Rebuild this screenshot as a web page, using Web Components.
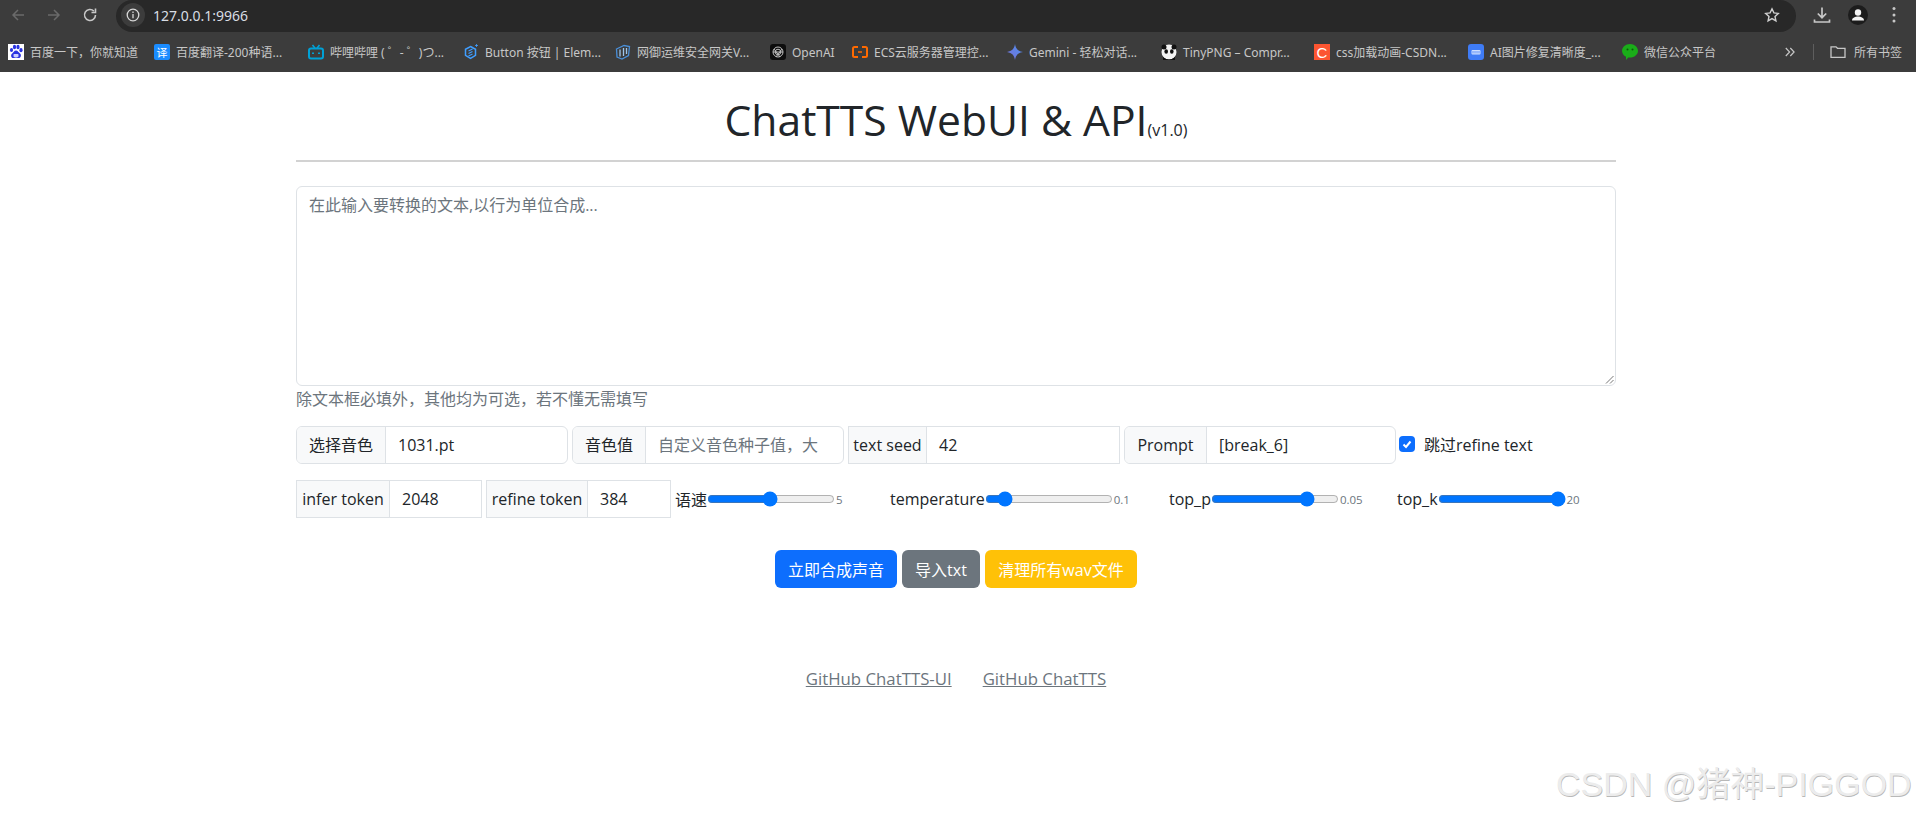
<!DOCTYPE html>
<html lang="zh">
<head>
<meta charset="utf-8">
<title>ChatTTS WebUI & API</title>
<style>
  html, body { margin: 0; padding: 0; background: #fff; }
  body { font-family: "Open Sans", "Noto Sans CJK SC", sans-serif; color: #212529; font-size: 16px; height: 813px; overflow: hidden; position: relative; }
</style>
</head>
<body>
<browser-toolbar url="127.0.0.1:9966"></browser-toolbar>
<bookmark-bar>
  <bookmark-item style="width:146px" label="百度一下，你就知道"><svg viewBox="0 0 16 16"><rect width="16" height="16" fill="#fff"/><g fill="#2932e1"><ellipse cx="3.500" cy="6" rx="1.600" ry="2.100"/><ellipse cx="6.500" cy="3" rx="1.600" ry="2.200"/><ellipse cx="10" cy="3" rx="1.600" ry="2.200"/><ellipse cx="13" cy="6.200" rx="1.600" ry="2.100"/><path d="M8 6.500c2 0 2.600 2 4 3 1.800 1.400.8 4.800-1.600 4.500-1-.1-1.600-.5-2.400-.5s-1.500.5-2.500.5C3.100 14.300 2.300 11 4.200 9.500 5.600 8.500 6 6.500 8 6.500z"/></g><rect x="5.500" y="10" width="5" height="3" rx=".8" fill="#cdd0ff"/></svg></bookmark-item>
  <bookmark-item style="width:154px" label="百度翻译-200种语..."><svg viewBox="0 0 16 16"><rect width="16" height="16" rx="2" fill="#1a8cff"/><text x="8" y="12.500" text-anchor="middle" font-size="11" font-family="Noto Sans CJK SC" fill="#fff">译</text></svg></bookmark-item>
  <bookmark-item style="width:155px" label="哔哩哔哩 ( ゜- ゜)つ..."><svg viewBox="0 0 16 16" fill="none" stroke="#00a1d6" stroke-width="2"><rect x="1" y="4.500" width="14" height="10" rx="2"/><path d="M4.500 1l2.500 3.200M11.500 1L9 4.200" stroke-width="1.600"/><path d="M5 8.500v1.500M11 8.500v1.500"/></svg></bookmark-item>
  <bookmark-item style="width:152px" label="Button 按钮 | Elem..."><svg viewBox="0 0 16 16" fill="none" stroke="#409eff" stroke-width="1.500"><path d="M7.500 2.500l5 2.800v6l-5 3-5-3v-6z"/><path d="M5.500 7l4-2M5.500 9.500l4-2M5.500 12l4-2" stroke-width="1.200"/><path d="M13.500 0v3M12 1.500h3" stroke-width=".8"/></svg></bookmark-item>
  <bookmark-item style="width:155px" label="网御运维安全网关V..."><svg viewBox="0 0 16 16" fill="none" stroke="#4a8fd8" stroke-width="1.300"><path d="M1.500 5L9 1.500l5.500 1-1 9L7 15l-5-2z"/><path d="M5 5.500v7M8.500 4v8M11.500 4v6" stroke="#9cc4ea"/></svg></bookmark-item>
  <bookmark-item style="width:82px" label="OpenAI"><svg viewBox="0 0 16 16"><rect width="16" height="16" rx="3" fill="#0d0d0d"/><g fill="none" stroke="#bdbdbd" stroke-width="1"><circle cx="8" cy="8" r="5"/><circle cx="8" cy="8" r="2.800"/><path d="M4 5l6 8M12 5l-6 8M3 8h10"/></g></svg></bookmark-item>
  <bookmark-item style="width:155px" label="ECS云服务器管理控..."><svg viewBox="0 0 16 16" fill="none" stroke="#ff6a00" stroke-width="2"><path d="M6 3H2.500Q1 3 1 4.500v7Q1 13 2.500 13H6M10 3h3.500Q15 3 15 4.500v7Q15 13 13.500 13H10"/><path d="M6 8h4" stroke-width="1.500"/></svg></bookmark-item>
  <bookmark-item style="width:154px" label="Gemini - 轻松对话..."><svg viewBox="0 0 16 16"><defs><linearGradient id="gem" x1="0" y1="1" x2="1" y2="0"><stop offset="0" stop-color="#7b6fd6"/><stop offset="1" stop-color="#4a90f0"/></linearGradient></defs><path d="M8 0c.6 4.500 3 7.200 8 8-5 .8-7.400 3.500-8 8-.6-4.500-3-7.200-8-8 5-.8 7.400-3.500 8-8z" fill="url(#gem)"/></svg></bookmark-item>
  <bookmark-item style="width:153px" label="TinyPNG – Compr..."><svg viewBox="0 0 16 16"><circle cx="8" cy="8" r="7.500" fill="#f4f4f4"/><circle cx="3" cy="3" r="2.500" fill="#111"/><circle cx="13" cy="3" r="2.500" fill="#111"/><ellipse cx="5.200" cy="7.500" rx="1.800" ry="2.200" fill="#111"/><ellipse cx="10.800" cy="7.500" rx="1.800" ry="2.200" fill="#111"/><path d="M2 13q6 5 12 0v3H2z" fill="#111"/></svg></bookmark-item>
  <bookmark-item style="width:154px" label="css加载动画-CSDN..."><svg viewBox="0 0 16 16"><rect width="16" height="16" fill="#fc5531"/><text x="8" y="13.500" text-anchor="middle" font-size="15" font-family="Liberation Sans" fill="#fff">C</text></svg></bookmark-item>
  <bookmark-item style="width:154px" label="AI图片修复清晰度_..."><svg viewBox="0 0 16 16"><rect width="16" height="16" rx="3" fill="#3f7cf6"/><rect x="3.500" y="6" width="9" height="4.500" rx="1" fill="#cfe0ff"/><path d="M5 7v2.500M7 7v2.500M9 7v2.500M11 7v2.500" stroke="#3f7cf6" stroke-width=".8"/></svg></bookmark-item>
  <bookmark-item style="width:100px" label="微信公众平台"><svg viewBox="0 0 16 16"><path d="M8 0c4.400 0 8 3 8 6.800s-3.600 6.800-8 6.800c-.6 0-1.200-.1-1.700-.2L4 16v-3.200C1.600 11.600 0 9.400 0 6.800 0 3 3.600 0 8 0z" fill="#1aad19"/><circle cx="5.500" cy="5.500" r="1" fill="#0b5c0a"/><circle cx="10.500" cy="5.500" r="1" fill="#0b5c0a"/></svg></bookmark-item>
  <bookmark-end></bookmark-end>
</bookmark-bar>
<tts-page></tts-page>
<csdn-mark>CSDN @猪神-PIGGOD</csdn-mark>

<script>
const UI_FONT = '"Open Sans", "Noto Sans CJK SC", sans-serif';

class BrowserToolbar extends HTMLElement {
  constructor() {
    super();
    this.attachShadow({ mode: 'open' });
  }
  connectedCallback() {
    this.shadowRoot.innerHTML = `
      <style>
        :host { display: flex; height: 32px; background: #3c3c3c; align-items: stretch; }
        .nav { display: flex; width: 116px; align-items: center; gap: 20px; padding: 0 0 2px 10px; box-sizing: border-box; flex: none; }
        svg { display: block; flex: none; }
        .omni { width: 1680px; flex: none; background: #282828; border-radius: 16px; display: flex; align-items: center; padding: 0 16px 2px 5px; box-sizing: border-box; }
        .info { width: 24px; height: 24px; background: #3c3c3c; border-radius: 50%; display: flex; align-items: center; justify-content: center; }
        .url { margin-left: 8px; font: 14px "Noto Sans", sans-serif; color: #d8dde3; }
        .star { margin-left: auto; }
        .tools { flex: 1; display: flex; align-items: center; gap: 17px; padding: 0 0 2px 17px; }
      </style>
      <div class="nav">
        <svg width="16" height="16" viewBox="0 0 16 16" fill="none" stroke="#6a6a6a" stroke-width="1.500"><path d="M14 8H3M8 3L3 8l5 5"/></svg>
        <svg width="16" height="16" viewBox="0 0 16 16" fill="none" stroke="#6a6a6a" stroke-width="1.500"><path d="M2 8h11M8 3l5 5-5 5"/></svg>
        <svg width="16" height="16" viewBox="0 0 16 16" fill="none" stroke="#c7c7c7" stroke-width="1.600"><path d="M13.500 8a5.500 5.500 0 1 1-1.600-3.900"/><path d="M13.500 1.500v4H9.500"/></svg>
      </div>
      <div class="omni">
        <div class="info"><svg width="14" height="14" viewBox="0 0 14 14" fill="none" stroke="#d8d8d8" stroke-width="1.300"><circle cx="7" cy="7" r="5.800"/><path d="M7 6v4.200M7 3.600v1.300"/></svg></div>
        <span class="url">${this.getAttribute('url')}</span>
        <svg class="star" width="16" height="16" viewBox="0 0 16 16" fill="none" stroke="#d0d0d0" stroke-width="1.400"><path d="M8 1.800l1.900 4.100 4.400.5-3.300 3 .9 4.400L8 11.600l-3.900 2.200.9-4.400-3.300-3 4.400-.5z"/></svg>
      </div>
      <div class="tools">
        <svg width="18" height="18" viewBox="0 0 18 18" fill="none" stroke="#c7c7c7" stroke-width="1.700"><path d="M9 1.500v10M4.800 7.500L9 11.700l4.200-4.200M1.500 13.500v2.500h15v-2.500"/></svg>
        <svg width="20" height="20" viewBox="0 0 20 20"><circle cx="10" cy="10" r="10" fill="#1c1c1c"/><circle cx="10" cy="7.500" r="3.200" fill="#f2f2f2"/><path d="M4 15.500c0-3 3.500-4 6-4s6 1 6 4z" fill="#f2f2f2"/></svg>
        <svg width="18" height="18" viewBox="0 0 18 18" fill="#c7c7c7"><circle cx="9" cy="2.500" r="1.500"/><circle cx="9" cy="9" r="1.500"/><circle cx="9" cy="15" r="1.500"/></svg>
      </div>
    `;
  }
}

class BookmarkBar extends HTMLElement {
  constructor() {
    super();
    this.attachShadow({ mode: 'open' });
  }
  connectedCallback() {
    this.shadowRoot.innerHTML = `
      <style>
        :host { display: flex; height: 40px; background: #3c3c3c; align-items: center; padding-left: 8px; box-sizing: border-box; }
      </style>
      <slot></slot>
    `;
  }
}

class BookmarkItem extends HTMLElement {
  constructor() {
    super();
    this.attachShadow({ mode: 'open' });
  }
  connectedCallback() {
    this.shadowRoot.innerHTML = `
      <style>
        :host { display: flex; align-items: center; gap: 6px; flex: none; font: 12px "Noto Sans", "Noto Sans CJK SC", sans-serif; color: #c7c7c7; white-space: nowrap; overflow: hidden; }
        ::slotted(svg) { width: 16px; height: 16px; flex: none; display: block; }
      </style>
      <slot></slot><span>${this.getAttribute('label')}</span>
    `;
  }
}

class BookmarkEnd extends HTMLElement {
  constructor() {
    super();
    this.attachShadow({ mode: 'open' });
  }
  connectedCallback() {
    this.shadowRoot.innerHTML = `
      <style>
        :host { display: flex; align-items: center; margin-left: auto; padding-right: 14px; font: 12px "Noto Sans", "Noto Sans CJK SC", sans-serif; color: #c7c7c7; }
        .sep { width: 1px; height: 16px; background: #5e5e5e; margin: 0 16px 0 18px; }
        svg { display: block; flex: none; }
        .folder { margin-right: 8px; }
      </style>
      <svg width="10" height="10" viewBox="0 0 10 10" fill="none" stroke="#c7c7c7" stroke-width="1.200"><path d="M.8 1l3.800 4-3.800 4M5.300 1l3.800 4-3.800 4"/></svg>
      <span class="sep"></span>
      <svg class="folder" width="16" height="16" viewBox="0 0 16 16" fill="none" stroke="#c7c7c7" stroke-width="1.300"><path d="M1 2.800h5l1.500 1.500H15v9H1z"/></svg>
      <span>所有书签</span>
    `;
  }
}

class FormField extends HTMLElement {
  constructor() {
    super();
    this.attachShadow({ mode: 'open' });
  }
  connectedCallback() {
    const r = this.hasAttribute('square') ? '0' : '6px';
    this.shadowRoot.innerHTML = `
      <style>
        :host { display: flex; height: 38px; flex: none; box-sizing: border-box; border: 1px solid #dee2e6; border-radius: ${r}; overflow: hidden; background: #fff; line-height: 24px; }
        .addon { flex: none; width: var(--addon, 90px); box-sizing: border-box; background: #f8f9fa; border-right: 1px solid #dee2e6; display: flex; align-items: center; justify-content: center; white-space: nowrap; }
        .val { flex: 1; padding-left: 12px; display: flex; align-items: center; min-width: 0; white-space: nowrap; overflow: hidden; }
        .hint { color: #6c757d; }
      </style>
      <div class="addon">${this.getAttribute('label')}</div>
      <div class="val ${this.hasAttribute('placeholder') ? 'hint' : ''}"><slot></slot></div>
    `;
  }
}

class RangeField extends HTMLElement {
  constructor() {
    super();
    this.attachShadow({ mode: 'open' });
  }
  connectedCallback() {
    this.shadowRoot.innerHTML = `
      <style>
        :host { display: flex; align-items: center; flex: none; white-space: nowrap; height: 38px; }
        input { margin: 0; width: 128px; flex: none; accent-color: #0075ff; }
        .num { font-size: 11.500px; color: #6c757d; margin-left: 1px; }
      </style>
      <label>${this.getAttribute('label')}</label>
      <input type="range" min="0" max="100" value="${this.getAttribute('pos')}">
      <span class="num">${this.getAttribute('num')}</span>
    `;
  }
}

class TtsButton extends HTMLElement {
  constructor() {
    super();
    this.attachShadow({ mode: 'open' });
  }
  connectedCallback() {
    this.shadowRoot.innerHTML = `
      <style>
        :host { display: flex; align-items: center; justify-content: center; height: 38px; flex: none; box-sizing: border-box; border-radius: 6px; color: #fff; background: var(--bg, #0d6efd); white-space: nowrap; cursor: pointer; }
      </style>
      <slot></slot>
    `;
  }
}

class CsdnMark extends HTMLElement {
  constructor() {
    super();
    this.attachShadow({ mode: 'open' });
  }
  connectedCallback() {
    this.shadowRoot.innerHTML = `
      <style>
        :host { position: absolute; left: 1556px; top: 757px; font: 34px "Liberation Sans", "Noto Sans CJK SC", sans-serif; color: #ececec; text-shadow: .6px .6px .6px #b8b8b8; white-space: nowrap; }
      </style>
      <slot></slot>
    `;
  }
}

class TtsPage extends HTMLElement {
  constructor() {
    super();
    this.attachShadow({ mode: 'open' });
  }
  connectedCallback() {
    this.shadowRoot.innerHTML = `
      <style>
        :host { display: block; width: 1320px; margin-left: 296px; font-family: ${UI_FONT}; }
        header { height: 90px; border-bottom: 2px solid #d2d2d2; box-sizing: border-box; display: flex; justify-content: center; align-items: baseline; padding-top: 21px; margin-bottom: 24px; }
        h1 { margin: 0; font: 400 42.600px/52px "Open Sans", sans-serif; color: #212529; }
        h1 small { font: 16px "Open Sans", sans-serif; }
        .input { height: 200px; box-sizing: border-box; border: 1px solid #dee2e6; border-radius: 6px; padding: 6px 12px; color: #6c757d; line-height: 24px; position: relative; }
        .grip { position: absolute; right: 1px; bottom: 1px; display: block; }
        .note { color: #6c757d; line-height: 24px; margin: 1px 0 15px; }
        .row { display: flex; align-items: center; gap: 4px; }
        .row + .row { margin-top: 16px; }
        .check { display: flex; align-items: center; gap: 9px; white-space: nowrap; margin: -3px 0 0 -1px; }
        .box { width: 16px; height: 16px; border-radius: 4px; background: #0d6efd; display: flex; align-items: center; justify-content: center; }
        .actions { display: flex; justify-content: center; gap: 5px; margin-top: 32px; }
        footer { display: flex; justify-content: center; gap: 31px; margin-top: 79px; line-height: 24px; font-size: 16.800px; }
        a { color: #6c757d; text-decoration: underline; }
      </style>
      <header><h1>ChatTTS WebUI &amp; API<small>(v1.0)</small></h1></header>
      <div class="input">在此输入要转换的文本,以行为单位合成...
        <svg class="grip" width="10" height="10" viewBox="0 0 10 10" stroke="#777" stroke-width="1"><path d="M2 9.500L9.500 2M6 9.500L9.500 6"/></svg>
      </div>
      <div class="note">除文本框必填外，其他均为可选，若不懂无需填写</div>
      <div class="row">
        <form-field style="width:272px;--addon:89px" label="选择音色">1031.pt</form-field>
        <form-field style="width:272px;--addon:73px" label="音色值" placeholder>自定义音色种子值，大</form-field>
        <form-field style="width:272px;--addon:78px" label="text seed" square>42</form-field>
        <form-field style="width:272px;--addon:82px" label="Prompt">[break_6]</form-field>
        <div class="check">
          <span class="box"><svg width="12" height="12" viewBox="0 0 12 12" fill="none" stroke="#fff" stroke-width="2"><path d="M2.500 6.500L5 9l4.500-5.500"/></svg></span>
          <span>跳过refine text</span>
        </div>
      </div>
      <div class="row">
        <form-field style="width:186px;--addon:93px" label="infer token" square>2048</form-field>
        <form-field style="width:185px;--addon:101px" label="refine token" square>384</form-field>
        <range-field style="width:211px" label="语速" pos="49" num="5"></range-field>
        <range-field style="width:275px" label="temperature" pos="11" num="0.1"></range-field>
        <range-field style="width:224px" label="top_p" pos="79" num="0.05"></range-field>
        <range-field label="top_k" pos="100" num="20"></range-field>
      </div>
      <div class="actions">
        <tts-button style="width:122px">立即合成声音</tts-button>
        <tts-button style="width:78px;--bg:#6c757d">导入txt</tts-button>
        <tts-button style="width:152px;--bg:#ffc107">清理所有wav文件</tts-button>
      </div>
      <footer>
        <a href="#">GitHub ChatTTS-UI</a>
        <a href="#">GitHub ChatTTS</a>
      </footer>
    `;
  }
}

customElements.define('browser-toolbar', BrowserToolbar);
customElements.define('bookmark-bar', BookmarkBar);
customElements.define('bookmark-item', BookmarkItem);
customElements.define('bookmark-end', BookmarkEnd);
customElements.define('form-field', FormField);
customElements.define('range-field', RangeField);
customElements.define('tts-button', TtsButton);
customElements.define('csdn-mark', CsdnMark);
customElements.define('tts-page', TtsPage);
</script>
</body>
</html>
